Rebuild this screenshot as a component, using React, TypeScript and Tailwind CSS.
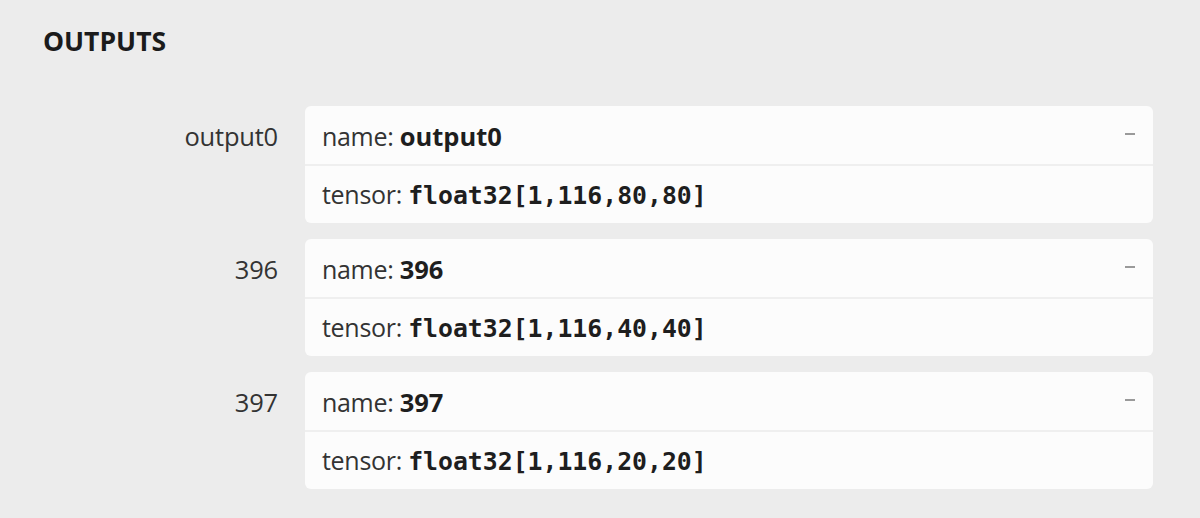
import React from "react";

const outputs = [
  { label: "output0", name: "output0", type: "float32[1,116,80,80]" },
  { label: "396", name: "396", type: "float32[1,116,40,40]" },
  { label: "397", name: "397", type: "float32[1,116,20,20]" },
];

const sans = "font-['Open_Sans',sans-serif]";
const mono = "font-['DejaVu_Sans_Mono',monospace]";

export default function App() {
  return (
    <div className={`w-[1200px] h-[518px] overflow-hidden bg-[#ececec] pl-[43px] pr-[47px] pt-[21px] ${sans}`}>
      <h2 className="text-[26.5px] leading-[40px] font-bold text-[#1b1b1b]">OUTPUTS</h2>
      <div className="mt-[45px] flex flex-col gap-[16px]">
        {outputs.map((o) => (
          <div key={o.label} className="flex gap-[27px]">
            <div className="w-[235px] h-[58px] pt-[3px] flex items-center justify-end text-[25.5px] text-[#333] tracking-[-0.2px]">
              {o.label}
            </div>
            <div className="flex-1 rounded-[6px] bg-[#fcfcfc] overflow-hidden">
              <div className="h-[58px] pl-[17px] pr-[18px] pt-[3px] flex items-center justify-between">
                <span className="text-[25px] text-[#333] tracking-[-0.3px]">
                  name: <b className="font-bold text-[#1e1e1e] text-[25.5px] tracking-normal">{o.name}</b>
                </span>
                <span className="w-[10px] h-[2px] bg-[#9a9a9a] mb-[5px]" />
              </div>
              <div className="h-[59px] border-t-2 border-[#efefef] pl-[17px] pt-[2px] flex items-center">
                <span className="text-[25px] text-[#333] tracking-[-0.3px]">
                  tensor: <code className={`${mono} font-bold text-[24.8px] text-[#1e1e1e] tracking-normal`}>{o.type}</code>
                </span>
              </div>
            </div>
          </div>
        ))}
      </div>
    </div>
  );
}
